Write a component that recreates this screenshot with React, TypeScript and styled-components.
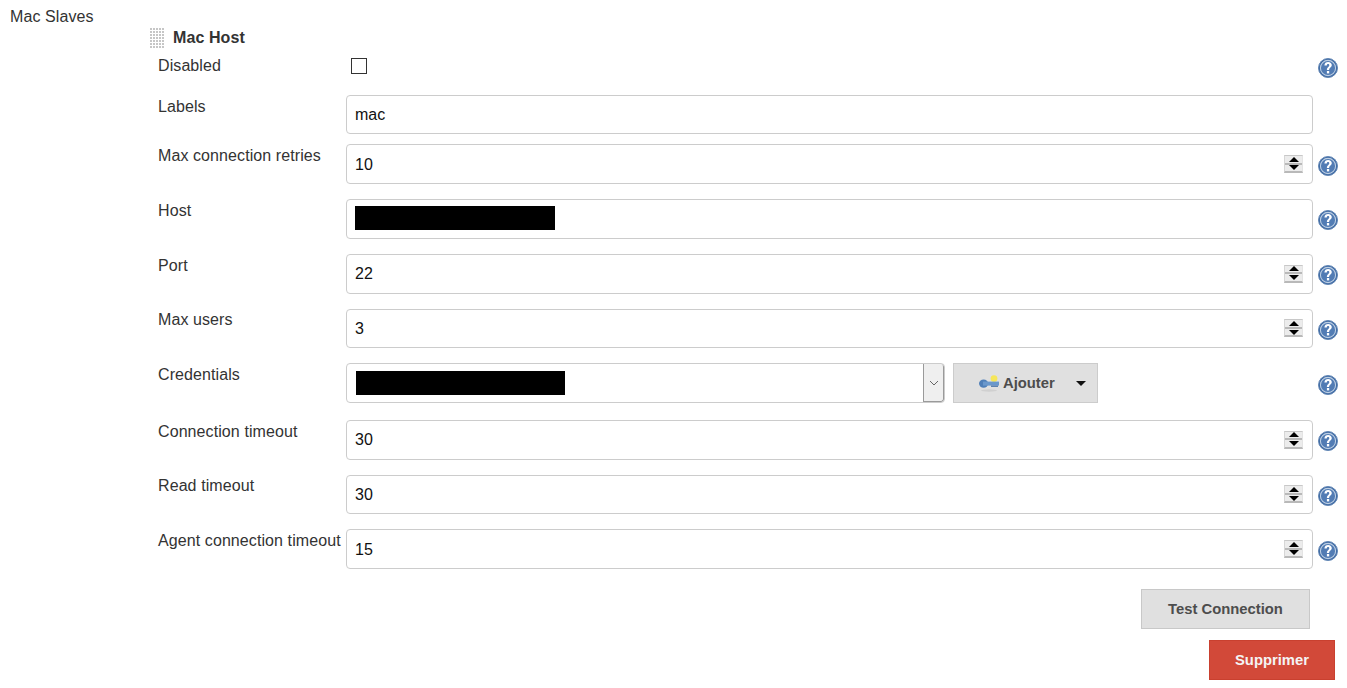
import React from 'react';
import styled, { createGlobalStyle } from 'styled-components';

const GlobalStyle = createGlobalStyle`
  html, body {
    margin: 0;
    padding: 0;
    background: #fff;
    overflow: hidden;
  }
  body {
    font-family: 'Liberation Sans', Arial, sans-serif;
    font-size: 16px;
    color: #333;
  }
`;

const Page = styled.div`
  display: grid;
  grid-template-columns: 149px 1fr;
  width: 1347px;
  height: 688px;
  padding: 8px 0 0 10px;
  box-sizing: border-box;
`;

const SectionName = styled.div`
  font-size: 16px;
  line-height: 18px;
  letter-spacing: 0.1px;
  margin-right: -10px;
`;

const Chunk = styled.div`
  margin-left: -10px;
  padding-top: 18px;
`;

const ChunkHeader = styled.div`
  display: flex;
  align-items: center;
  height: 24px;
  gap: 9px;
`;

const Handle = styled.div`
  width: 15px;
  height: 22px;
  background-color: #c6c6c6;
  background-image: linear-gradient(90deg, #fff 1px, transparent 1px),
    linear-gradient(#fff 1px, transparent 1px);
  background-size: 3px 3px;
`;

const ChunkTitle = styled.div`
  font-weight: 700;
  font-size: 16px;
  letter-spacing: 0.1px;
  color: #333;
`;

const Row = styled.div<{ $gap?: number; $height?: number }>`
  display: grid;
  grid-template-columns: 188px 967px 25px;
  margin-left: 9px;
  height: ${(p) => p.$height ?? 39.8}px;
  margin-bottom: ${(p) => p.$gap ?? 14.95}px;
`;

const Label = styled.div<{ $top?: number }>`
  font-size: 16px;
  line-height: 18px;
  letter-spacing: 0.09px;
  padding-top: ${(p) => p.$top ?? 2.8}px;
  white-space: nowrap;
`;

const CheckCell = styled.div`
  padding: 8px 0 0 5px;
`;

const CheckBox = styled.div`
  width: 14px;
  height: 14px;
  border: 1px solid #333;
  background: #fff;
`;

const InputBox = styled.div`
  box-sizing: border-box;
  display: flex;
  align-items: center;
  justify-content: space-between;
  height: 100%;
  padding: 0 9px 0 8px;
  border: 1px solid #ccc;
  border-radius: 4px;
  font-size: 16px;
  color: #111;
`;

const FieldValue = styled.span`
  padding-top: 1px;
`;

const Spinner = styled.div`
  box-sizing: border-box;
  display: flex;
  flex-direction: column;
  width: 19px;
  height: 18px;
  background: #ececec;
  border-top: 1px solid #c8c8c8;
  border-bottom: 2px solid #b9b9b9;
  border-left: 1px solid #d6d6d6;
  border-right: 1px solid #e4e4e4;
`;

const SpinHalf = styled.div<{ $lower?: boolean }>`
  flex: 1;
  display: flex;
  align-items: center;
  justify-content: center;
  border-top: ${(p) => (p.$lower ? '2px solid #b9b9b9' : 'none')};
`;

const SpinUp = styled.div`
  width: 0;
  height: 0;
  border-left: 5px solid transparent;
  border-right: 5px solid transparent;
  border-bottom: 5px solid #000;
`;

const SpinDown = styled.div`
  width: 0;
  height: 0;
  border-left: 5px solid transparent;
  border-right: 5px solid transparent;
  border-top: 5px solid #000;
`;

const Redacted = styled.div<{ $width: number; $raised?: boolean }>`
  width: ${(p) => p.$width}px;
  height: 24px;
  margin-bottom: ${(p) => (p.$raised ? 1 : 0)}px;
  background: #000;
`;

const HelpCell = styled.div<{ $top?: number }>`
  padding: ${(p) => p.$top ?? 11.3}px 0 0 5px;
`;

const CredentialField = styled.div`
  display: flex;
  align-items: stretch;
  height: 100%;
  gap: 8px;
`;

const SelectBox = styled.div`
  box-sizing: border-box;
  display: flex;
  align-items: center;
  justify-content: space-between;
  width: 599px;
  padding-left: 9px;
  border: 1px solid #ccc;
  border-radius: 4px;
  overflow: hidden;
`;

const SelectArrow = styled.div`
  box-sizing: border-box;
  display: flex;
  align-items: center;
  justify-content: center;
  width: 21px;
  height: 100%;
  background: #efefef;
  border-left: 1px solid #9a9a9a;
  border-right: 1px solid #9a9a9a;
  border-bottom: 1px solid #9a9a9a;
  border-radius: 0 3px 3px 0;
`;

const AddButton = styled.div`
  box-sizing: border-box;
  display: flex;
  align-items: center;
  width: 145px;
  padding-left: 25px;
  background: #e0e0e0;
  border: 1px solid #ccc;
  font-size: 14.8px;
  font-weight: 700;
  color: #4d4d4d;
`;

const AddLabel = styled.span`
  margin-left: 4px;
`;

const Caret = styled.div`
  width: 0;
  height: 0;
  margin-left: 21px;
  border-left: 5px solid transparent;
  border-right: 5px solid transparent;
  border-top: 5px solid #111;
`;

const Actions = styled.div`
  display: flex;
  flex-direction: column;
  align-items: flex-end;
  gap: 11px;
  padding-top: 5px;
  margin-right: 12px;
`;

const Button = styled.div<{ $danger?: boolean }>`
  box-sizing: border-box;
  display: flex;
  align-items: center;
  justify-content: center;
  height: 40px;
  width: ${(p) => (p.$danger ? 126 : 169)}px;
  margin-right: ${(p) => (p.$danger ? 0 : 25)}px;
  background: ${(p) => (p.$danger ? '#d24939' : '#e0e0e0')};
  border: 1px solid ${(p) => (p.$danger ? '#c9402f' : '#c8c8c8')};
  color: ${(p) => (p.$danger ? '#f4f4f4' : '#4d4d4d')};
  font-size: 14.8px;
  font-weight: 700;
`;

function HelpIcon() {
  return (
    <svg width="20" height="20" viewBox="0 0 20 20">
      <circle cx="10" cy="10" r="9.5" fill="#3a66a1" stroke="#6488b6" strokeWidth="1" />
      <circle cx="10" cy="10" r="7.6" fill="#527cb4" stroke="#bccee3" strokeWidth="1.1" />
      <path
        d="M6.4 7.6 C6.4 4.9 8.2 3.9 10.1 3.9 C12.3 3.9 13.8 5.2 13.8 7.1 C13.8 9.5 11.1 9.7 11.1 12 L8.9 12 C8.9 9.1 11.3 9 11.3 7.3 C11.3 6.5 10.8 6 10 6 C9.2 6 8.8 6.6 8.8 7.6 Z"
        fill="#fff"
      />
      <rect x="8.9" y="13" width="2.3" height="2.4" fill="#fff" />
    </svg>
  );
}

function KeyIcon() {
  return (
    <svg width="20" height="18" viewBox="0 0 20 18">
      <ellipse cx="10" cy="16.5" rx="8" ry="1.2" fill="#d0d0d0" />
      <circle cx="15" cy="4.6" r="3.4" fill="#f6e65a" />
      <ellipse cx="4.6" cy="9.6" rx="4.6" ry="4.2" fill="#4f7fb8" />
      <rect x="4" y="7.6" width="16" height="4" fill="#6a98cc" />
      <rect x="12" y="11.6" width="7" height="1.2" fill="#3f6ca3" />
    </svg>
  );
}

function ChevronDown() {
  return (
    <svg width="10" height="6" viewBox="0 0 10 6">
      <path d="M1 1 L5 5 L9 1" fill="none" stroke="#666" strokeWidth="1" />
    </svg>
  );
}

function NumberField({ value }: { value: string }) {
  return (
    <InputBox>
      <FieldValue>{value}</FieldValue>
      <Spinner>
        <SpinHalf>
          <SpinUp />
        </SpinHalf>
        <SpinHalf $lower>
          <SpinDown />
        </SpinHalf>
      </Spinner>
    </InputBox>
  );
}

type NumberRowProps = { label: string; value: string; gap?: number };

function NumberRow({ label, value, gap }: NumberRowProps) {
  return (
    <Row $gap={gap}>
      <Label>{label}</Label>
      <NumberField value={value} />
      <HelpCell>
        <HelpIcon />
      </HelpCell>
    </Row>
  );
}

export default function App() {
  return (
    <Page>
      <GlobalStyle />
      <SectionName>Mac Slaves</SectionName>
      <Chunk>
        <ChunkHeader>
          <Handle />
          <ChunkTitle>Mac Host</ChunkTitle>
        </ChunkHeader>
        <Row $height={45} $gap={0}>
          <Label $top={7}>Disabled</Label>
          <CheckCell>
            <CheckBox />
          </CheckCell>
          <HelpCell $top={8}>
            <HelpIcon />
          </HelpCell>
        </Row>
        <Row $height={39} $gap={10.3}>
          <Label>Labels</Label>
          <InputBox>mac</InputBox>
        </Row>
        <NumberRow label="Max connection retries" value="10" />
        <Row>
          <Label>Host</Label>
          <InputBox>
            <Redacted $width={200} $raised />
          </InputBox>
          <HelpCell>
            <HelpIcon />
          </HelpCell>
        </Row>
        <NumberRow label="Port" value="22" />
        <NumberRow label="Max users" value="3" />
        <Row $gap={16.8}>
          <Label>Credentials</Label>
          <CredentialField>
            <SelectBox>
              <Redacted $width={209} />
              <SelectArrow>
                <ChevronDown />
              </SelectArrow>
            </SelectBox>
            <AddButton>
              <KeyIcon />
              <AddLabel>Ajouter</AddLabel>
              <Caret />
            </AddButton>
          </CredentialField>
          <HelpCell>
            <HelpIcon />
          </HelpCell>
        </Row>
        <NumberRow label="Connection timeout" value="30" />
        <NumberRow label="Read timeout" value="30" />
        <NumberRow label="Agent connection timeout" value="15" />
        <Actions>
          <Button>Test Connection</Button>
          <Button $danger>Supprimer</Button>
        </Actions>
      </Chunk>
    </Page>
  );
}
